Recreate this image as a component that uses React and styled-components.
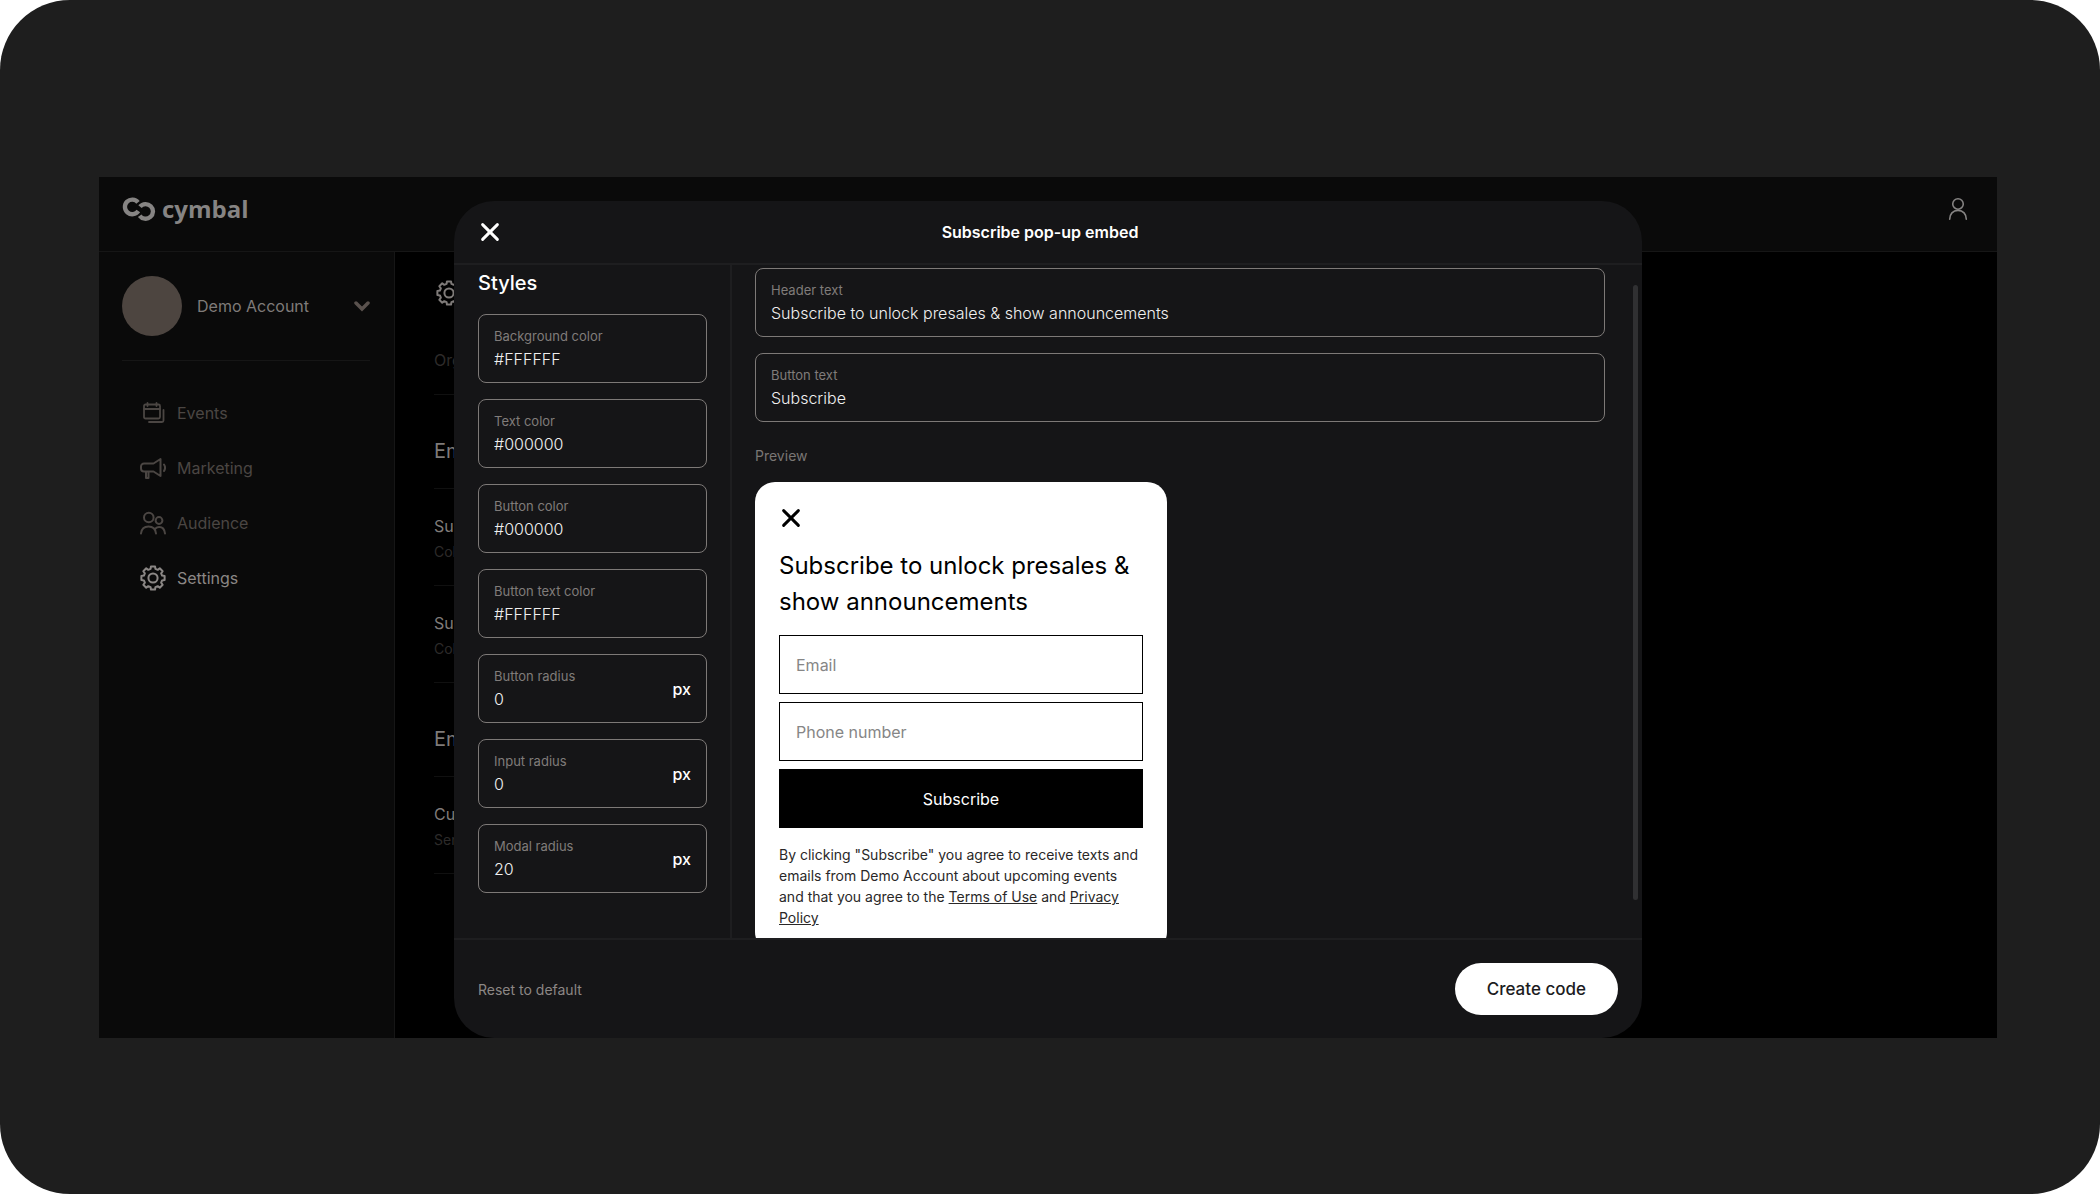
import React, { useState } from 'react';
import styled, { createGlobalStyle } from 'styled-components';

const GlobalStyle = createGlobalStyle`
	* {
		box-sizing: border-box;
	}
	body {
		margin: 0;
		background-color: #fff;
		font-family: Inter, "Liberation Sans", sans-serif;
		font-size: 16px;
	}
	button, input {
		font-family: inherit;
		margin: 0;
	}
	button {
		cursor: pointer;
	}
`;

const Stage = styled.div`
	display: flex;
	min-height: 100vh;
	padding: 177px 103px 156px 99px;
	border-radius: 70px;
	background-color: #1e1e1e;
`;

const AppWindow = styled.div`
	position: relative;
	display: flex;
	flex-direction: column;
	flex: 1;
	overflow: hidden;
	background-color: #000;
`;

const TopBar = styled.header`
	display: flex;
	align-items: center;
	justify-content: space-between;
	height: 75px;
	padding: 0 27px 10px 23px;
	border-bottom: 1px solid #161616;
	background-color: #0a0a0a;
`;

const Brand = styled.div`
	display: flex;
	align-items: center;
	gap: 5px;
	color: #868483;
`;

const BrandName = styled.span`
	font-family: "Open Sans", sans-serif;
	font-size: 24px;
	line-height: 32px;
	font-weight: 700;
`;

const IconButton = styled.button`
	display: flex;
	align-items: center;
	justify-content: center;
	width: 24px;
	height: 24px;
	padding: 0;
	border: 0;
	background: none;
	color: ${({ $color }) => $color};
`;

const Columns = styled.div`
	display: flex;
	flex: 1;
`;

const SideBar = styled.aside`
	width: 296px;
	flex-shrink: 0;
	padding: 24px 24px 0 23px;
	border-right: 1px solid #161616;
	background-color: #0a0a0a;
`;

const AccountButton = styled.button`
	display: flex;
	align-items: center;
	width: 100%;
	padding: 0 0 24px;
	border: 0;
	border-bottom: 1px solid #161616;
	background: none;
	color: #7f7b79;
	font-size: 16px;
	line-height: 24px;
	text-align: left;
`;

const Avatar = styled.span`
	width: 60px;
	height: 60px;
	margin-right: 15px;
	border-radius: 50%;
	background-color: #4d4540;
`;

const AccountName = styled.span`
	flex: 1;
`;

const Nav = styled.nav`
	display: flex;
	flex-direction: column;
	padding: 24px 0 0 18px;
`;

const NavLink = styled.a`
	display: flex;
	align-items: center;
	gap: 11px;
	height: 55px;
	color: ${({ $active }) => ($active ? '#8b8785' : '#4b4643')};
	font-size: 16px;
	line-height: 24px;
	text-decoration: none;
`;

const Main = styled.main`
	width: 1000px;
	padding: 25px 39px 0;
	color: #7f7b79;
`;

const MainTitle = styled.div`
	display: flex;
	height: 32px;
	padding-left: 2px;
	align-items: center;
`;

const Tabs = styled.div`
	display: flex;
	align-items: center;
	height: 86px;
	padding-top: 16px;
	border-bottom: 1px solid #101010;
	color: #2d2b2a;
	font-size: 16px;
`;

const SectionTitle = styled.h2`
	display: flex;
	align-items: center;
	height: 94px;
	margin: 0;
	padding-top: 18px;
	border-bottom: 1px solid #101010;
	font-size: 20px;
	font-weight: 400;
`;

const Setting = styled.div`
	height: 97px;
	padding-top: 24px;
	border-bottom: 1px solid #101010;
	font-size: 16px;
	line-height: 26px;
`;

const SettingNote = styled.div`
	color: #2d2b2a;
	font-size: 14px;
`;

const Backdrop = styled.div`
	position: absolute;
	inset: 0;
	display: flex;
	justify-content: center;
	padding-top: 24px;
`;

const Modal = styled.section`
	display: flex;
	flex-direction: column;
	width: 100%;
	max-width: 1188px;
	overflow: hidden;
	border-radius: 40px;
	background-color: #151517;
	color: #fff;
`;

const ModalHeader = styled.header`
	display: grid;
	grid-template-columns: 24px 1fr 40px;
	align-items: center;
	height: 64px;
	flex-shrink: 0;
	padding: 0 24px;
	border-bottom: 2px solid #1e1e20;
`;

const ModalTitle = styled.h1`
	margin: 0;
	font-size: 16px;
	line-height: 24px;
	font-weight: 600;
	text-align: center;
`;

const ModalBody = styled.div`
	position: relative;
	display: flex;
	flex: 1;
	min-height: 0;
	overflow: hidden;
`;

const StylesPanel = styled.div`
	display: flex;
	flex-direction: column;
	gap: 16px;
	width: 278px;
	flex-shrink: 0;
	padding: 3px 23px 0 24px;
	border-right: 2px solid #1e1e20;
`;

const PanelTitle = styled.h2`
	margin: 0;
	font-size: 20px;
	line-height: 30px;
	font-weight: 500;
`;

const ContentPanel = styled.div`
	display: flex;
	flex-direction: column;
	gap: 16px;
	flex: 1;
	padding: 3px 37px 0 23px;
`;

const FieldBox = styled.label`
	display: flex;
	align-items: center;
	height: 69px;
	flex-shrink: 0;
	padding: 0 15px;
	border: 1px solid #7d7977;
	border-radius: 8px;
`;

const FieldText = styled.span`
	display: flex;
	flex-direction: column;
	gap: 4px;
	flex: 1;
	min-width: 0;
`;

const FieldLabel = styled.span`
	color: #807c7a;
	font-size: 13px;
	line-height: 16px;
`;

const FieldInput = styled.input`
	width: 100%;
	height: 22px;
	padding: 0;
	border: 0;
	outline: 0;
	background: none;
	color: #f0f0f0;
	font-size: 16px;
	font-weight: 300;
`;

const Unit = styled.span`
	font-size: 16px;
	font-weight: 500;
`;

const PreviewLabel = styled.div`
	margin-top: 8px;
	color: #7a7674;
	font-size: 14px;
	line-height: 20px;
`;

const PreviewCard = styled.form`
	width: 412px;
	flex-shrink: 0;
	padding: 24px;
	border-radius: ${({ $radius }) => $radius}px;
	background-color: ${({ $background }) => $background};
	color: ${({ $color }) => $color};
`;

const PreviewTitle = styled.h3`
	margin: 18px 0 15px;
	font-size: 24px;
	line-height: 36px;
	font-weight: 400;
`;

const PreviewInput = styled.input`
	display: block;
	width: 100%;
	height: 59px;
	margin-bottom: 8px;
	padding: 0 16px;
	border: 1px solid #000;
	border-radius: ${({ $radius }) => $radius}px;
	background: none;
	font-size: 16px;
	&::placeholder {
		color: #868686;
		opacity: 1;
	}
`;

const PreviewSubmit = styled.button`
	display: block;
	width: 100%;
	height: 59px;
	border: 0;
	border-radius: ${({ $radius }) => $radius}px;
	background-color: ${({ $background }) => $background};
	color: ${({ $color }) => $color};
	font-size: 16px;
`;

const Legal = styled.p`
	margin: 16px 0 0;
	color: #2a2828;
	font-size: 14px;
	line-height: 21px;
	a {
		color: inherit;
	}
`;

// sits over the content, like an overlay scrollbar
const ScrollThumb = styled.div`
	position: absolute;
	top: 20px;
	right: 4px;
	bottom: 38px;
	width: 5px;
	border-radius: 3px;
	background-color: #303032;
`;

const ModalFooter = styled.footer`
	display: flex;
	align-items: center;
	justify-content: space-between;
	height: 100px;
	flex-shrink: 0;
	padding: 0 24px;
	border-top: 2px solid #1e1e20;
`;

const ResetButton = styled.button`
	padding: 0;
	border: 0;
	background: none;
	color: #8c8785;
	font-size: 14px;
`;

const CreateButton = styled.button`
	height: 52px;
	padding: 0 32px;
	border: 0;
	border-radius: 26px;
	background-color: #fff;
	color: #1c1c1e;
	font-size: 17px;
	font-weight: 500;
`;

const Icon = ({ size = 26, width = 2, children }) => (
	<svg
		width={size}
		height={size}
		viewBox="0 0 26 26"
		fill="none"
		stroke="currentColor"
		strokeWidth={width}
		strokeLinecap="round"
		strokeLinejoin="round"
		aria-hidden="true"
	>
		{children}
	</svg>
);

// eight teeth around a circle
const gearPath = () => {
	const points = [];
	for (let i = 0; i < 8; i++) {
		[[-15, 9.4], [-10, 11.8], [10, 11.8], [15, 9.4]].forEach(([shift, r]) => {
			const a = ((i * 45 + shift) * Math.PI) / 180;
			points.push(`${(13 + r * Math.sin(a)).toFixed(2)} ${(13 - r * Math.cos(a)).toFixed(2)}`);
		});
	}
	return `M${points.join('L')}Z`;
};

const GearIcon = () => (
	<Icon>
		<path d={gearPath()} />
		<circle cx="13" cy="13" r="4.6" />
	</Icon>
);

const EventsIcon = () => (
	<Icon width={1.8}>
		<rect x="4" y="4.5" width="16" height="14" rx="1.5" />
		<path d="M4 9h16M7.5 3v3M16.5 3v3M23.5 10v10.500a1.500 1.500 0 0 1-1.500 1.500H9" />
	</Icon>
);

const MarketingIcon = () => (
	<Icon width={2}>
		<path d="M20.500 4v17l-7-4.500H4a3 3 0 0 1-3-3v-2a3 3 0 0 1 3-3h9.500zM6 17v6h2.500v-6M24 9.500c1.300 2 1.300 4.500 0 6.500" />
	</Icon>
);

const AudienceIcon = () => (
	<Icon width={2}>
		<circle cx="8.800" cy="7.500" r="4.800" />
		<circle cx="19" cy="10.500" r="3.400" />
		<path d="M1 23.500c.5-4.500 3.500-7 7.500-7s7 2.500 7.500 7M15.500 18.500c1-1 2.300-1.500 3.700-1.500 3.200 0 5.400 2.500 5.800 6.500" />
	</Icon>
);

const UserIcon = () => (
	<Icon width={1.7}>
		<circle cx="13" cy="7.500" r="5.700" />
		<path d="M4 24c0-5.500 3.500-9.500 9-9.500s9 4 9 9.500" />
	</Icon>
);

const CrossIcon = ({ size }) => (
	<Icon size={size} width={3.2}>
		<path d="M5 5l16 16M21 5L5 21" />
	</Icon>
);

const Logo = () => (
	<svg width="35" height="24" viewBox="0 0 105 72" fill="none" stroke="currentColor" strokeWidth="13" aria-hidden="true">
		<path d="M48 16A22 22 0 1 0 49 42" />
		<path d="M54 29A22 22 0 1 1 53 56" />
	</svg>
);

const NAV = [
	{ name: 'Events', icon: EventsIcon },
	{ name: 'Marketing', icon: MarketingIcon },
	{ name: 'Audience', icon: AudienceIcon },
	{ name: 'Settings', icon: GearIcon, active: true },
];

const STYLE_FIELDS = [
	{ name: 'background', label: 'Background color' },
	{ name: 'text', label: 'Text color' },
	{ name: 'button', label: 'Button color' },
	{ name: 'buttonText', label: 'Button text color' },
	{ name: 'buttonRadius', label: 'Button radius', unit: 'px' },
	{ name: 'inputRadius', label: 'Input radius', unit: 'px' },
	{ name: 'modalRadius', label: 'Modal radius', unit: 'px' },
];

const DEFAULTS = {
	background: '#FFFFFF',
	text: '#000000',
	button: '#000000',
	buttonText: '#FFFFFF',
	buttonRadius: '0',
	inputRadius: '0',
	modalRadius: '20',
	header: 'Subscribe to unlock presales & show announcements',
	submit: 'Subscribe',
};

const Field = ({ label, unit, value, onChange }) => (
	<FieldBox>
		<FieldText>
			<FieldLabel>{label}</FieldLabel>
			<FieldInput type="text" value={value} onChange={(e) => onChange(e.target.value)} />
		</FieldText>
		{unit && <Unit>{unit}</Unit>}
	</FieldBox>
);

const App = () => {
	const [values, setValues] = useState(DEFAULTS);
	const change = (name) => (value) => setValues({ ...values, [name]: value });

	return (
		<Stage>
			<GlobalStyle />
			<AppWindow>
				<TopBar>
					<Brand>
						<Logo />
						<BrandName>cymbal</BrandName>
					</Brand>
					<IconButton $color="#868483" aria-label="Profile">
						<UserIcon />
					</IconButton>
				</TopBar>
				<Columns>
					<SideBar>
						<AccountButton>
							<Avatar />
							<AccountName>Demo Account</AccountName>
							<svg width="16" height="12" viewBox="0 0 16 12" fill="none" stroke="#5a524e" strokeWidth="3.500" strokeLinecap="round" aria-hidden="true">
								<path d="M2 3l6 6 6-6" />
							</svg>
						</AccountButton>
						<Nav>
							{NAV.map(({ name, icon: NavIcon, active }) => (
								<NavLink key={name} href="#" $active={active}>
									<NavIcon />
									{name}
								</NavLink>
							))}
						</Nav>
					</SideBar>
					<Main>
						<MainTitle><GearIcon /></MainTitle>
						<Tabs>Organization</Tabs>
						<SectionTitle>Embeds</SectionTitle>
						<Setting>
							Subscribe
							<SettingNote>Collect</SettingNote>
						</Setting>
						<Setting>
							Subscribe
							<SettingNote>Collect</SettingNote>
						</Setting>
						<SectionTitle>Email</SectionTitle>
						<Setting>
							Custom
							<SettingNote>Send</SettingNote>
						</Setting>
					</Main>
				</Columns>
				<Backdrop>
					<Modal role="dialog" aria-labelledby="modal-title">
						<ModalHeader>
							<IconButton $color="#fff" aria-label="Close">
								<CrossIcon size={24} />
							</IconButton>
							<ModalTitle id="modal-title">Subscribe pop-up embed</ModalTitle>
						</ModalHeader>
						<ModalBody>
							<StylesPanel>
								<PanelTitle>Styles</PanelTitle>
								{STYLE_FIELDS.map(({ name, label, unit }) => (
									<Field key={name} label={label} unit={unit} value={values[name]} onChange={change(name)} />
								))}
							</StylesPanel>
							<ContentPanel>
								<Field label="Header text" value={values.header} onChange={change('header')} />
								<Field label="Button text" value={values.submit} onChange={change('submit')} />
								<PreviewLabel>Preview</PreviewLabel>
								<PreviewCard
									$radius={values.modalRadius}
									$background={values.background}
									$color={values.text}
									onSubmit={(e) => e.preventDefault()}
								>
									<IconButton type="button" $color={values.text} aria-label="Close preview">
										<CrossIcon size={28} />
									</IconButton>
									<PreviewTitle>{values.header}</PreviewTitle>
									<PreviewInput type="email" placeholder="Email" aria-label="Email" $radius={values.inputRadius} />
									<PreviewInput type="tel" placeholder="Phone number" aria-label="Phone number" $radius={values.inputRadius} />
									<PreviewSubmit $radius={values.buttonRadius} $background={values.button} $color={values.buttonText}>
										{values.submit}
									</PreviewSubmit>
									<Legal>
										{`By clicking "${values.submit}" you agree to receive texts and emails from Demo Account about upcoming events and that you agree to the `}
										<a href="#">Terms of Use</a> and <a href="#">Privacy Policy</a>
									</Legal>
								</PreviewCard>
							</ContentPanel>
							<ScrollThumb />
						</ModalBody>
						<ModalFooter>
							<ResetButton onClick={() => setValues(DEFAULTS)}>Reset to default</ResetButton>
							<CreateButton>Create code</CreateButton>
						</ModalFooter>
					</Modal>
				</Backdrop>
			</AppWindow>
		</Stage>
	);
};

export default App;
